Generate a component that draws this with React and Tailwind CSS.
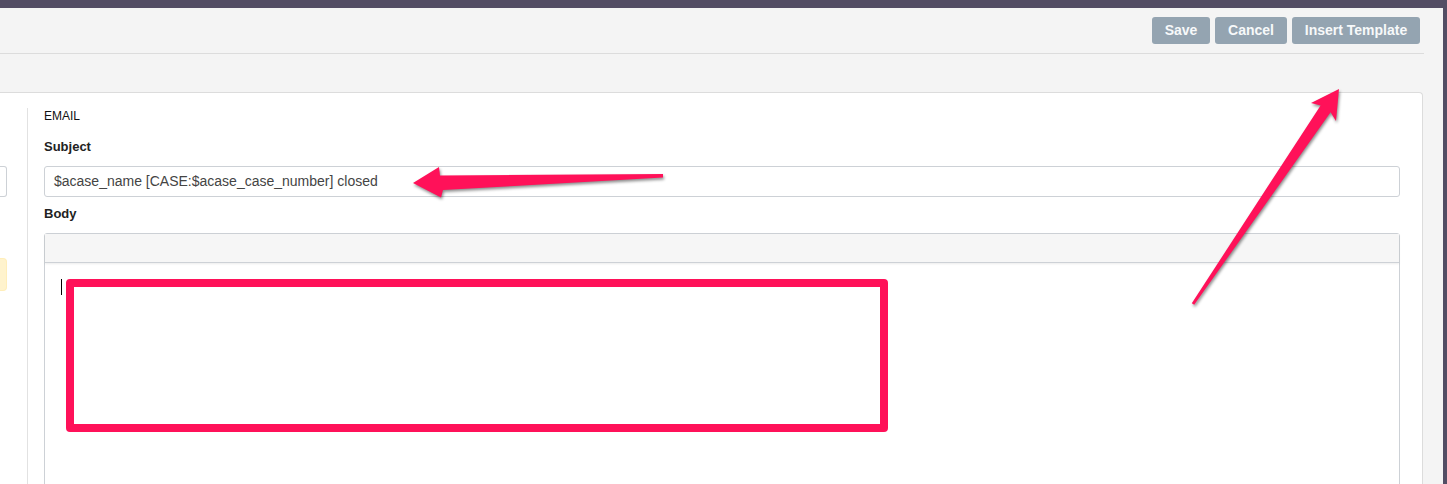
import React from 'react';

const font = "font-['Liberation_Sans',Arial,sans-serif]";

function Annotations() {
  return (
    <svg
      className="pointer-events-none absolute inset-0 drop-shadow-[1px_2px_1.5px_rgba(0,0,0,0.45)]"
      width="1447"
      height="484"
      viewBox="0 0 1447 484"
    >
      {/* flèche vers le sujet */}
      <polygon
        fill="#ff1159"
        points="413,183 439,167 440,175.5 663,174 663,177.5 443,190 441,197.5"
      />
      {/* flèche vers Insert Template */}
      <polygon
        fill="#ff1159"
        points="1339,89 1336,121 1330.6,112.2 1194.2,304.8 1191.8,303.2 1320.6,105.4 1311,103"
      />
    </svg>
  );
}

export default function App() {
  return (
    <div className={`relative h-[484px] w-[1447px] overflow-hidden bg-[#534d64] pt-[8px] pr-[4px] ${font}`}>
      <div className="h-full bg-[#f4f4f4]">
        {/* barre d'actions */}
        <div className="mr-[19px] flex h-[46px] justify-end border-b border-[#dcdcdc] pt-[9px] pr-[4px]">
          <div className="flex gap-[5px]">
            <button className="h-[27px] w-[58px] rounded-[3px] bg-[#94a4b1] text-[14px] font-bold text-[#f7f9fa]">Save</button>
            <button className="h-[27px] w-[72px] rounded-[3px] bg-[#94a4b1] text-[14px] font-bold text-[#f7f9fa]">Cancel</button>
            <button className="h-[27px] w-[128px] rounded-[3px] bg-[#94a4b1] text-[14px] font-bold text-[#f7f9fa]">Insert Template</button>
          </div>
        </div>

        {/* panneau */}
        <div className="mt-[38px] mr-[20px] flex h-[400px] rounded-tr-[4px] border-t border-r border-[#dcdcdc] bg-white pt-[15px]">
          <div className="w-[28px] shrink-0 border-r border-[#e2e2e2] pr-[20px]">
            <div className="mt-[58px] h-[31px] rounded-r-[3px] border border-l-0 border-[#cdd1d6]" />
            <div className="mt-[61px] h-[33px] rounded-r-[4px] border border-l-0 border-[#ffeeba] bg-[#fff3cd]" />
          </div>

          <div className="flex-1 pr-[22px] pl-[16px]">
            <div className="h-[17px] text-[12px] leading-[17px] text-[#111]">EMAIL</div>
            <div className="mt-[13px] text-[13px] leading-[18px] font-bold text-[#222]">Subject</div>
            <div className="mt-[10px] flex h-[31px] items-center rounded-[3px] border border-[#cdd1d6] px-[9px] text-[14px] text-[#444]">
              $acase_name [CASE:$acase_case_number] closed
            </div>
            <div className="mt-[8px] text-[13px] leading-[18px] font-bold text-[#222]">Body</div>
            <div className="mt-[10px] h-[300px] rounded-t-[3px] border border-[#cdd1d6]">
              <div className="h-[29px] border-b border-[#cdd1d6] bg-[#f6f6f6] shadow-[0_1px_2px_rgba(0,0,0,0.08)]" />
              <div className="pt-[16px] pl-[16px]">
                <div className="h-[16px] w-px bg-black" />
              </div>
            </div>
          </div>
        </div>
      </div>

      {/* cadre d'annotation */}
      <div className="absolute top-[279px] left-[66px] h-[153px] w-[822px] rounded-[4px] border-[8px] border-[#ff1159]" />
      <Annotations />
    </div>
  );
}
